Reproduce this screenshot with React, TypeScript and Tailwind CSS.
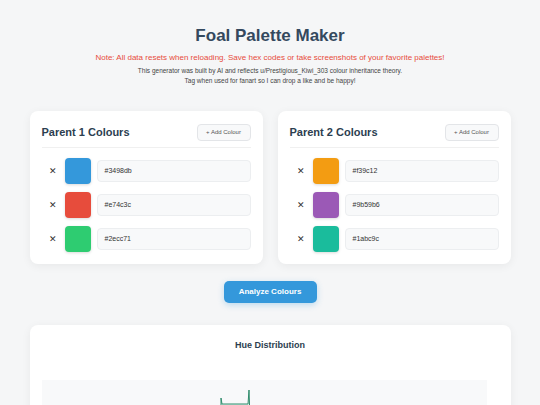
import { useState } from "react";

const font = { fontFamily: '"Liberation Sans", Arial, Helvetica, sans-serif' };

type Props = {
    title: string;
    colours: string[];
};

function ParentCard({ title, colours }: Props) {
    return (
        <div className="flex-1 bg-white rounded-[8px] shadow-[0_2px_10px_rgba(0,0,0,0.06)] px-3 pt-3 pb-3">
            <div className="flex items-center justify-between pb-[6px] border-b border-[#f0f0f0]">
                <h2 className="text-[11px] font-bold text-[#2c3e50] leading-[18px]">{title}</h2>
                <button className="h-[17px] w-[54px] rounded-[4px] border border-[#e3e5e8] bg-[#f8f9fa] text-[6px] text-[#555]">
                    + Add Colour
                </button>
            </div>
            <div className="flex flex-col gap-2 mt-[10px]">
                {colours.map((c) => (
                    <div key={c} className="flex items-center">
                        <span className="w-[23px] text-center text-[9px] text-[#333] leading-none">✕</span>
                        <div
                            className="w-[26px] h-[26px] rounded-[4px] shadow-[0_1px_3px_rgba(0,0,0,0.15)]"
                            style={{ backgroundColor: c }}
                        />
                        <div className="flex-1 ml-[6px] h-[22px] rounded-[4px] border border-[#eceef0] bg-[#f8f9fa] flex items-center px-[7px] text-[7px] text-[#333]">
                            {c}
                        </div>
                    </div>
                ))}
            </div>
        </div>
    );
}

export default function App() {
    const [p1] = useState(["#3498db", "#e74c3c", "#2ecc71"]);
    const [p2] = useState(["#f39c12", "#9b59b6", "#1abc9c"]);

    return (
        <div className="min-h-screen bg-[#f5f6f7] pt-[25px] pb-6" style={font}>
            <div className="w-[481px] mx-auto">
                <h1 className="text-center text-[17px] font-bold text-[#34495e] leading-[22px]">Foal Palette Maker</h1>
                <p className="text-center text-[8px] text-[#e74c3c] mt-[6px] leading-[9px]">
                    Note: All data resets when reloading. Save hex codes or take screenshots of your favorite palettes!
                </p>
                <p className="text-center text-[6.5px] text-[#444] mt-[4px] leading-[10px]">
                    This generator was built by AI and reflects u/Prestigious_Kiwi_303 colour inheritance theory.
                    <br />
                    Tag when used for fanart so I can drop a like and be happy!
                </p>

                <div className="flex gap-[15px] mt-[25px]">
                    <ParentCard title="Parent 1 Colours" colours={p1} />
                    <ParentCard title="Parent 2 Colours" colours={p2} />
                </div>

                <div className="flex justify-center mt-[17px]">
                    <button className="w-[93px] h-[22px] rounded-[5px] bg-[#3498db] text-white text-[8px] font-bold shadow-[0_2px_6px_rgba(52,152,219,0.3)]">
                        Analyze Colours
                    </button>
                </div>

                <div className="mt-[22px] bg-white rounded-[8px] shadow-[0_2px_10px_rgba(0,0,0,0.06)] px-3 pt-[14px] pb-4">
                    <h3 className="text-center text-[9px] font-bold text-[#2c3e50] leading-[12px]">Hue Distribution</h3>
                    <div className="mt-[29px] w-[445px] h-[200px] bg-[#f8f9fa]">
                        <svg width="445" height="200" viewBox="0 0 445 200">
                            <path d="M179 40 L179 18 L180 24 L206 24 L207 10 L208 40 Z" fill="rgba(26,188,156,0.15)" stroke="none" />
                            <path d="M179 40 L179 18 L180 24 L206 24 L207 10 L208 40" fill="none" stroke="#2e8b6a" strokeWidth="1" />
                        </svg>
                    </div>
                </div>
            </div>
        </div>
    );
}
